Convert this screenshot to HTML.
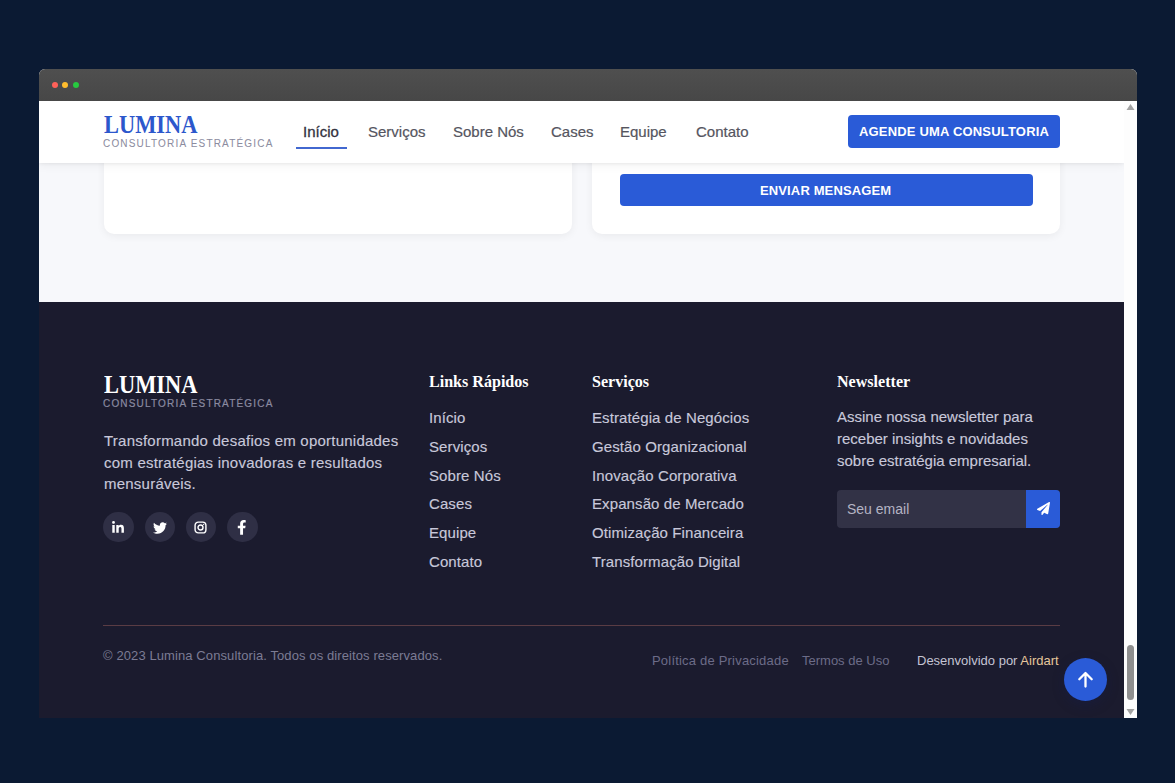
<!DOCTYPE html>
<html lang="pt">
<head>
<meta charset="utf-8">
<title>Lumina Consultoria</title>
<style>
*{margin:0;padding:0;box-sizing:border-box;}
html,body{width:1175px;height:783px;overflow:hidden;background:#0b1a33;}
body{position:relative;font-family:"Liberation Sans",sans-serif;}
.t{position:absolute;white-space:nowrap;}
.serif{font-family:"Liberation Serif",serif;font-weight:bold;transform-origin:0 0;}
.logo{transform:scaleX(0.862);}
.fh{transform:scaleX(0.945);}
#win{position:absolute;left:39px;top:69px;width:1098px;height:649px;overflow:hidden;border-radius:6px 6px 0 0;background:#fff;}
#bar{position:absolute;left:0;top:0;width:1098px;height:32px;background:linear-gradient(#4f4f4f,#474747);}
.dot{position:absolute;top:12.6px;width:6.4px;height:6.4px;border-radius:50%;}
#page{position:absolute;left:0;top:32px;width:1085px;height:617px;overflow:hidden;background:#f7f8fb;}
#sb{position:absolute;left:1085px;top:32px;width:13px;height:617px;background:#fdfdfd;}
#hdr{position:absolute;left:0;top:0;width:1085px;height:62px;background:#fff;box-shadow:0 1px 3px rgba(0,0,0,0.05),0 2px 10px rgba(0,0,0,0.06);z-index:5;}
.card{position:absolute;background:#fff;border-radius:10px;box-shadow:0 2px 8px rgba(0,0,0,0.06);}
.btn{position:absolute;background:#2a5bd7;border-radius:4px;}
#foot{position:absolute;left:0;top:201px;width:1085px;height:416px;background:#1b1b2e;}
.nav{font-size:15px;line-height:15px;color:#555560;-webkit-text-stroke:0.2px #555560;}
.fl{font-size:15px;line-height:15px;color:#c8c8da;letter-spacing:0.1px;-webkit-text-stroke:0.15px #c8c8da;}
.soc{position:absolute;top:210px;width:30.4px;height:30.4px;border-radius:50%;background:#2f2f45;}
</style>
</head>
<body>
<div id="win">
  <div id="bar">
    <div class="dot" style="left:12.6px;background:#ff6159;"></div>
    <div class="dot" style="left:23px;background:#ffbd2e;"></div>
    <div class="dot" style="left:33.5px;background:#27c93f;"></div>
  </div>
  <div id="page">
    <!-- contact section remnants -->
    <div class="card" style="left:64.5px;top:-40px;width:468.5px;height:173px;"></div>
    <div class="card" style="left:553px;top:-40px;width:468px;height:173px;">
      <div class="btn" style="left:28px;top:113px;width:413px;height:32px;"></div>
    </div>
    <div class="t" style="left:721px;top:83px;font-size:13px;line-height:13px;color:#fff;font-weight:bold;letter-spacing:0.13px;">ENVIAR MENSAGEM</div>

    <!-- header -->
    <div id="hdr">
      <div class="t serif logo" style="left:65px;top:11px;font-size:26px;line-height:26px;color:#2c57cc;">LUMINA</div>
      <div class="t" style="left:64px;top:38px;font-size:10px;line-height:10px;color:#8c8ca0;letter-spacing:1.18px;-webkit-text-stroke:0.05px #8c8ca0;">CONSULTORIA ESTRATÉGICA</div>
      <div class="t nav" style="left:264px;top:23px;color:#333340;-webkit-text-stroke:0.3px #333340;">Início</div>
      <div style="position:absolute;left:257px;top:46px;width:51px;height:2px;background:#4268d0;"></div>
      <div class="t nav" style="left:329px;top:23px;">Serviços</div>
      <div class="t nav" style="left:414px;top:23px;">Sobre Nós</div>
      <div class="t nav" style="left:512px;top:23px;">Cases</div>
      <div class="t nav" style="left:581px;top:23px;">Equipe</div>
      <div class="t nav" style="left:657px;top:23px;">Contato</div>
      <div class="btn" style="left:809px;top:14px;width:212px;height:33px;"></div>
      <div class="t" style="left:820px;top:24px;font-size:13px;line-height:13px;color:#fff;font-weight:bold;letter-spacing:0.18px;">AGENDE UMA CONSULTORIA</div>
    </div>

    <!-- footer -->
    <div id="foot">
      <div class="t serif logo" style="left:65px;top:70px;font-size:26px;line-height:26px;color:#fff;">LUMINA</div>
      <div class="t" style="left:64px;top:97px;font-size:10px;line-height:10px;color:#8a8aa0;letter-spacing:1.18px;-webkit-text-stroke:0.2px #8a8aa0;">CONSULTORIA ESTRATÉGICA</div>
      <div class="t fl" style="left:65px;top:128px;line-height:21.5px;letter-spacing:0.23px;">Transformando desafios em oportunidades<br>com estratégias inovadoras e resultados<br>mensuráveis.</div>
      <div class="soc" style="left:64.4px;"><svg viewBox="0 0 448 512" style="position:absolute;left:8.5px;top:9px;width:12px;height:13.5px;"><path fill="#fff" d="M100.28 448H7.4V148.9h92.88zM53.79 108.1C24.09 108.1 0 83.5 0 53.8a53.79 53.79 0 0 1 107.58 0c0 29.7-24.1 54.3-53.79 54.3zM447.9 448h-92.68V302.4c0-34.7-.7-79.2-48.29-79.2-48.290 0-55.69 37.7-55.69 76.7V448h-92.78V148.9h89.08v40.8h1.3c12.4-23.5 42.690-48.3 87.88-48.3 94 0 111.28 61.9 111.28 142.3V448z"/></svg></div>
      <div class="soc" style="left:105.6px;"><svg viewBox="0 0 512 512" style="position:absolute;left:8px;top:8.5px;width:14px;height:14px;"><path fill="#fff" d="M459.37 151.716c.325 4.548.325 9.097.325 13.645 0 138.72-105.583 298.558-298.558 298.558-59.452 0-114.68-17.219-161.137-47.106 8.447.974 16.568 1.299 25.34 1.299 49.055 0 94.213-16.568 130.274-44.832-46.132-.975-84.792-31.188-98.112-72.772 6.498.974 12.995 1.624 19.818 1.624 9.421 0 18.843-1.3 27.614-3.573-48.081-9.747-84.143-51.98-84.143-102.985v-1.299c13.969 7.797 30.214 12.670 47.431 13.319-28.264-18.843-46.781-51.005-46.781-87.391 0-19.492 5.197-37.36 14.294-52.954 51.655 63.675 129.3 105.258 216.365 109.807-1.624-7.797-2.599-15.918-2.599-24.04 0-57.828 46.782-104.934 104.934-104.934 30.213 0 57.502 12.67 76.670 33.137 23.715-4.548 46.456-13.32 66.599-25.34-7.798 24.366-23.716 44.833-44.833 57.827 20.792-2.273 40.934-8.122 59.452-16.243-14.292 20.791-32.161 39.308-52.628 54.253z"/></svg></div>
      <div class="soc" style="left:146.8px;"><svg viewBox="0 0 24 24" style="position:absolute;left:8.2px;top:8.8px;width:13px;height:13px;"><rect x="2" y="2" width="20" height="20" rx="6" fill="none" stroke="#fff" stroke-width="2.6"/><circle cx="12" cy="12" r="4.6" fill="none" stroke="#fff" stroke-width="2.6"/><circle cx="17.8" cy="6.2" r="1.3" fill="#fff"/></svg></div>
      <div class="soc" style="left:188.4px;"><svg viewBox="0 0 320 512" style="position:absolute;left:9.6px;top:8.2px;width:9.5px;height:14.8px;"><path fill="#fff" d="M279.14 288l14.22-92.66h-88.91v-60.13c0-25.35 12.42-50.06 52.24-50.06h40.42V6.26S260.43 0 225.36 0c-73.22 0-121.08 44.38-121.08 124.72v70.620H22.89V288h81.39v224h100.17V288z"/></svg></div>

      <div class="t serif fh" style="left:390px;top:71px;font-size:17px;line-height:17px;color:#fff;">Links Rápidos</div>
      <div class="t fl" style="left:390px;top:108px;">Início</div>
      <div class="t fl" style="left:390px;top:137px;">Serviços</div>
      <div class="t fl" style="left:390px;top:166px;">Sobre Nós</div>
      <div class="t fl" style="left:390px;top:194px;">Cases</div>
      <div class="t fl" style="left:390px;top:223px;">Equipe</div>
      <div class="t fl" style="left:390px;top:252px;">Contato</div>

      <div class="t serif fh" style="left:553px;top:71px;font-size:17px;line-height:17px;color:#fff;">Serviços</div>
      <div class="t fl" style="left:553px;top:108px;">Estratégia de Negócios</div>
      <div class="t fl" style="left:553px;top:137px;">Gestão Organizacional</div>
      <div class="t fl" style="left:553px;top:166px;">Inovação Corporativa</div>
      <div class="t fl" style="left:553px;top:194px;">Expansão de Mercado</div>
      <div class="t fl" style="left:553px;top:223px;">Otimização Financeira</div>
      <div class="t fl" style="left:553px;top:252px;">Transformação Digital</div>

      <div class="t serif fh" style="left:798px;top:71px;font-size:17px;line-height:17px;color:#fff;">Newsletter</div>
      <div class="t fl" style="left:798px;top:104.4px;line-height:21.8px;letter-spacing:0px;">Assine nossa newsletter para<br>receber insights e novidades<br>sobre estratégia empresarial.</div>
      <div style="position:absolute;left:798px;top:188px;width:223px;height:38px;border-radius:4px;background:#323246;overflow:hidden;">
        <div style="position:absolute;left:189px;top:0;width:34px;height:38px;background:#2a5bd7;"><svg viewBox="0 0 512 512" style="position:absolute;left:10.5px;top:12px;width:13px;height:13px;"><path fill="#fff" d="M476 3.2L12.5 270.6c-18.1 10.4-15.8 35.6 2.2 43.2L121 358.4l287.3-253.2c5.5-4.9 13.3 2.6 8.6 8.3L176 407v80.5c0 23.6 28.5 32.9 42.5 15.8L282 426l124.6 52.2c14.2 6 30.4-2.9 33-18.2l72-432C515 7.8 493.3-6.8 476 3.2z"/></svg></div>
      </div>
      <div class="t" style="left:808px;top:200px;font-size:14px;line-height:14px;color:#b4b4c4;">Seu email</div>

      <div style="position:absolute;left:64px;top:323px;width:957px;height:1px;background:#5a3c44;"></div>
      <div class="t" style="left:64px;top:347px;font-size:13px;line-height:13px;color:#7c7c94;letter-spacing:0.1px;">© 2023 Lumina Consultoria. Todos os direitos reservados.</div>
      <div class="t" style="left:613px;top:352px;font-size:13px;line-height:13px;color:#6c6c88;letter-spacing:0.2px;">Política de Privacidade</div>
      <div class="t" style="left:763px;top:352px;font-size:13px;line-height:13px;color:#6c6c88;">Termos de Uso</div>
      <div class="t" style="left:878px;top:352px;font-size:13px;line-height:13px;color:#c4c4d4;">Desenvolvido por <span style="color:#e6c79c;">Airdart</span></div>
      <div style="position:absolute;left:1025px;top:355.5px;width:43px;height:43px;border-radius:50%;background:#2a5bd7;box-shadow:0 4px 12px rgba(20,30,80,0.35);"><svg viewBox="0 0 43 43" style="position:absolute;left:0;top:0;width:43px;height:43px;"><path d="M21.5 28.5V15.2M15.3 21.2L21.5 15.0L27.7 21.2" fill="none" stroke="#fff" stroke-width="2.3" stroke-linecap="round" stroke-linejoin="round"/></svg></div>
    </div>
  </div>
  <div id="sb"><svg width="13" height="617" style="position:absolute;left:0;top:0;"><path d="M2.5 9L6.5 3L10.5 9Z" fill="#a3a3a3"/><rect x="3" y="544" width="7" height="55" rx="3.5" fill="#8f8f8f"/><path d="M2.5 608L6.5 614L10.5 608Z" fill="#a3a3a3"/></svg></div>
</div>
</body>
</html>
